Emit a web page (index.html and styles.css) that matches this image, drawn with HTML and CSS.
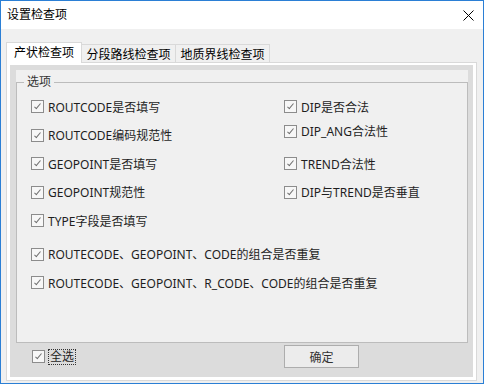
FILE: index.html
```html
<!DOCTYPE html>
<html lang="zh-CN">
  <head>
    <meta charset="UTF-8" />
    <title>设置检查项</title>
    <link rel="stylesheet" href="styles.css">
  </head>
  <body>
    <div class="window">
      <div class="titlebar">
        <span class="title">设置检查项</span>
        <svg class="close" width="11" height="11" viewBox="0 0 11 11">
          <path d="M0.5 0.5 L10.5 10.5 M10.5 0.5 L0.5 10.5" stroke="#000" stroke-width="1" fill="none" />
        </svg>
      </div>

      <div class="client">
        <div class="tabs">
          <div class="tab active">产状检查项</div>
          <div class="tab">分段路线检查项</div>
          <div class="tab">地质界线检查项</div>
        </div>

        <div class="panel">
          <div class="page">
            <div class="group">
              <fieldset>
                <legend>选项</legend>
                <div class="checks">
                  <label class="check"><span class="box"></span>ROUTCODE是否填写</label>
                  <label class="check"><span class="box"></span>DIP是否合法</label>
                  <label class="check"><span class="box"></span>ROUTCODE编码规范性</label>
                  <label class="check raise"><span class="box"></span>DIP_ANG合法性</label>
                  <label class="check"><span class="box"></span>GEOPOINT是否填写</label>
                  <label class="check"><span class="box"></span>TREND合法性</label>
                  <label class="check"><span class="box"></span>GEOPOINT规范性</label>
                  <label class="check"><span class="box"></span>DIP与TREND是否垂直</label>
                  <label class="check"><span class="box"></span>TYPE字段是否填写</label>
                  <label class="check wide spaced"><span class="box"></span>ROUTECODE、GEOPOINT、CODE的组合是否重复</label>
                  <label class="check wide"><span class="box"></span>ROUTECODE、GEOPOINT、R_CODE、CODE的组合是否重复</label>
                </div>
              </fieldset>
            </div>

            <div class="footer">
              <label class="select-all"><span class="box"></span><span class="focus">全选</span></label>
              <button class="ok-btn">确定</button>
            </div>
          </div>
        </div>
      </div>
    </div>
  </body>
</html>
```

FILE: styles.css
```css
/* --- Reset & base --- */
*, *::before, *::after {
  box-sizing: border-box;
  margin: 0;
  padding: 0;
}
body {
  font-family: "Noto Sans", "Noto Sans CJK SC", sans-serif;
  font-size: 12px;
  color: #1e1e1e;
  background: #f0f0f0;
}

/* --- Window frame --- */
.window {
  width: 484px;
  height: 384px;
  border: 1px solid #2b7fd5;
  background: #f0f0f0;
  display: flex;
  flex-direction: column;
}
.titlebar {
  height: 28px;
  background: #fff;
  display: flex;
  align-items: center;
  justify-content: space-between;
  padding: 0 9px 0 6px;
}
.title {
  color: #000;
  line-height: 16px;
}
.close {
  display: block;
}

/* --- Tab control --- */
.client {
  flex: 1;
  display: flex;
  flex-direction: column;
  padding: 13px 6px 2px 5px;
}
.tabs {
  display: flex;
  align-items: flex-end;
  height: 20px;
}
.tab {
  height: 18px;
  width: 95px;
  margin-left: -1px;
  border: 1px solid #d9d9d9;
  border-bottom: none;
  background: #f0f0f0;
  text-align: center;
  line-height: 18px;
  padding-top: 1px;
  color: #000;
}
.tab.active {
  width: 76px;
  height: 21px;
  margin-left: 0;
  margin-bottom: -1px;
  background: #fff;
  line-height: 19px;
  padding-top: 0;
  position: relative;
  z-index: 1;
}
.panel {
  flex: 1;
  display: flex;
  border: 1px solid #d9d9d9;
  background: #fff;
  padding: 2px 3px 3px 3px;
}
.page {
  flex: 1;
  display: flex;
  flex-direction: column;
  background: #dcdcdc;
  padding: 5px 5px 0 6px;
}

/* --- Options group --- */
.group {
  height: 273px;
  background: #f0f0f0;
  padding-top: 4px;
  display: flex;
}
fieldset {
  flex: 1;
  border: 1px solid #bcbcbc;
}
legend {
  margin-left: 7px;
  padding: 0 3px;
  line-height: 16px;
  color: #333;
}
.checks {
  display: grid;
  grid-template-columns: 253px 1fr;
  margin: 2.5px 0 0 14px;
}
.check {
  display: flex;
  align-items: center;
  gap: 4px;
  height: 28.5px;
  white-space: nowrap;
}
.check.raise {
  margin-top: -4px;
  margin-bottom: 4px;
}
.check.wide {
  grid-column: 1 / -1;
}
.check.spaced {
  margin-top: 5px;
}

/* --- Checkbox --- */
.box {
  position: relative;
  flex: none;
  width: 13px;
  height: 13px;
  border: 1px solid #8c8c8c;
  background: #f7f7f7;
}
.box::after {
  content: "";
  position: absolute;
  left: 3.5px;
  top: 1px;
  width: 3px;
  height: 7px;
  border: solid #707070;
  border-width: 0 1.4px 1.4px 0;
  transform: rotate(40deg);
}

/* --- Footer row --- */
.footer {
  display: grid;
  grid-template-columns: 252px 75px;
  align-items: center;
  height: 23px;
  margin-top: 2px;
  padding-left: 16px;
}
.select-all {
  display: flex;
  align-items: center;
  gap: 3px;
}
.focus {
  border: 1px dotted #333;
  padding: 0 1px;
  line-height: 14px;
}
.ok-btn {
  width: 75px;
  height: 23px;
  border: 1px solid #adadad;
  background: #ececec;
  font: inherit;
  color: #333;
}
```
